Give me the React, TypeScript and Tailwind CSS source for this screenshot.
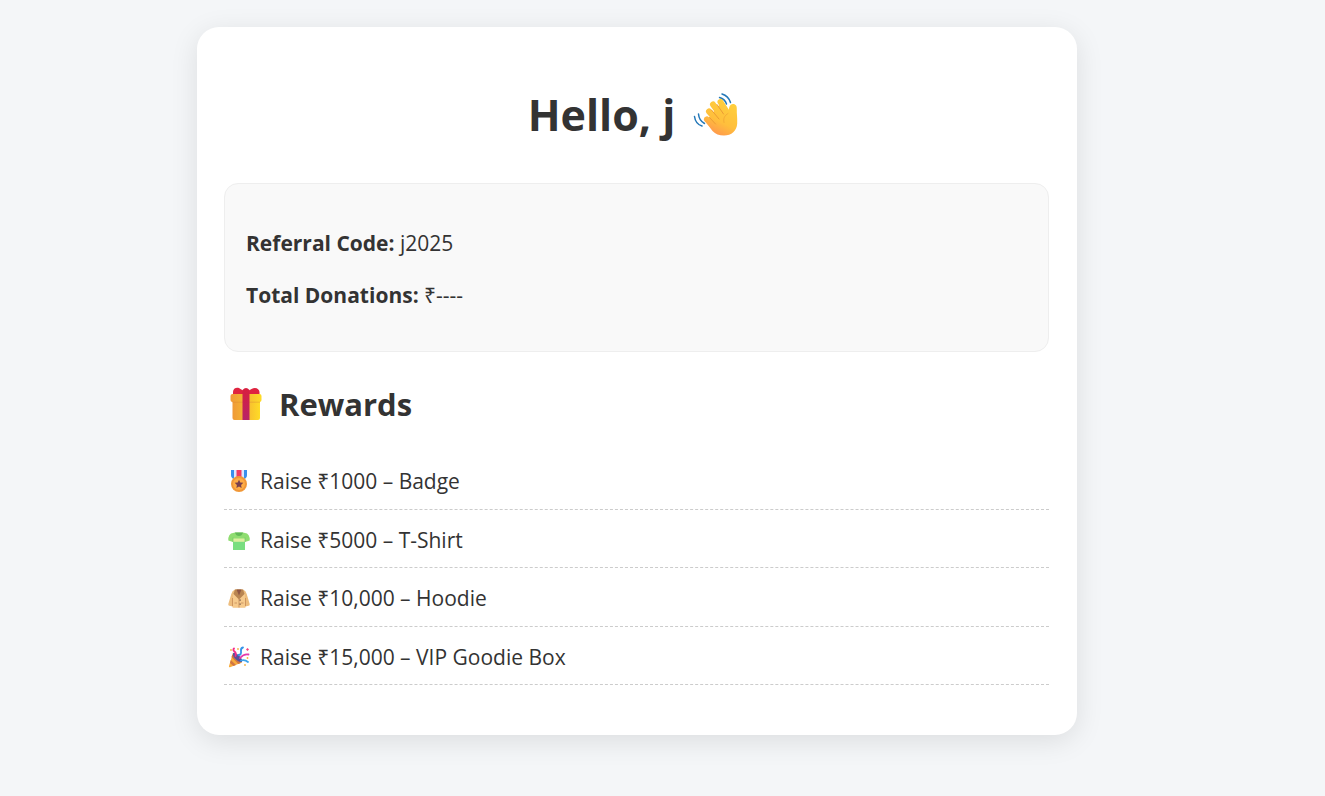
import type { ReactNode } from "react";

function WaveIcon() {
  return (
    <svg viewBox="0 0 46 46" className="h-[46px] w-[46px] shrink-0" aria-hidden="true">
      <defs>
        <linearGradient id="hand" gradientUnits="userSpaceOnUse" x1="36" y1="8" x2="18" y2="42">
          <stop offset="0" stopColor="#ffd03c" />
          <stop offset="0.6" stopColor="#ffbf3c" />
          <stop offset="1" stopColor="#ff944f" />
        </linearGradient>
      </defs>
      <g fill="none" stroke="#2478b8" strokeWidth="1.5" strokeLinecap="round">
        <path d="M26.500 5.500q5.500 1.500 7 6.500" />
        <path d="M29 2q6.500 2 8.500 8.500" />
        <path d="M5.500 22q.5 6.500 6 9.500" />
        <path d="M1.500 24.500q1 7.500 7.500 9.500" />
      </g>
      <g stroke="url(#hand)" strokeWidth="6" strokeLinecap="round" fill="none">
        <path d="M27.500 10 37 25" />
        <path d="M20 12.500 31 28" />
        <path d="M16 19.500 27 32" />
        <path d="M14 27.500 23 37" />
      </g>
      <path fill="url(#hand)" d="M18 23 27 12l6.500 8.500c1 1 2 .5 2.200-1 .1-4.500 1.300-7.500 4.300-7.500 3 0 4 2.300 3.800 5.500-.2 4 .7 8 .4 14C43.800 39 38.500 43.500 31 43.500c-5 0-8.500-1.500-11.500-4.500l-6-8z" />
      <g fill="none" stroke="#ec9c34" strokeWidth="1" strokeLinecap="round">
        <path d="M24 12.500 30.500 22" />
        <path d="M18.500 18 26 27" />
        <path d="M16.500 25.500 22.500 32" />
        <path d="M35 21.500c-3.500 2-5 5-4 9" opacity="0.6" />
      </g>
    </svg>
  );
}

function GiftIcon() {
  return (
    <svg viewBox="0 0 34 34" className="h-[34px] w-[34px] shrink-0" aria-hidden="true">
      <defs>
        <linearGradient id="box">
          <stop offset="0" stopColor="#f09a38" />
          <stop offset="0.5" stopColor="#f4b832" />
          <stop offset="1" stopColor="#ffdc26" />
        </linearGradient>
        <linearGradient id="ribbon" x2="0" y2="1">
          <stop offset="0" stopColor="#d91e3d" />
          <stop offset="1" stopColor="#b72468" />
        </linearGradient>
      </defs>
      <path fill="#df2440" d="M4 8V5C4 .500 9-.500 11.500 2L15 4h4l3.500-2C26-.500 30.500 1.500 30.500 5V9H4z" />
      <rect x="3.500" y="10" width="27.500" height="23" rx="2" fill="url(#box)" />
      <rect x="1.500" y="7" width="31" height="8" rx="2" fill="url(#box)" />
      <path d="M3.500 15.200H31" stroke="#dc8735" strokeWidth=".6" opacity=".7" />
      <path d="M13.500 3q3.500-4 7 0v30h-7z" fill="url(#ribbon)" />
    </svg>
  );
}

function MedalIcon() {
  return (
    <svg viewBox="0 0 22 24" className="h-6 w-[22px] shrink-0" aria-hidden="true">
      <path fill="#3b8fec" d="M3 1h16v5q0 3-3 4H6Q3 9 3 6z" />
      <path fill="#dce7ff" d="M6 1h10v9H6z" />
      <path fill="#f23b62" d="M8.500 1h5v8h-5z" />
      <circle cx="11" cy="15" r="8" fill="#f29a38" />
      <circle cx="11" cy="15" r="6.400" fill="#ffad45" stroke="#e68938" strokeWidth=".6" />
      <path fill="#79404d" d="m11 10.700 1.300 2.700 3 .4-2.200 2.100.5 3-2.600-1.400-2.600 1.400.5-3-2.200-2.100 3-.4z" />
    </svg>
  );
}

function ShirtIcon() {
  return (
    <svg viewBox="0 0 22 24" className="h-6 w-[22px] shrink-0" aria-hidden="true">
      <path fill="#8fdd70" d="M7 4.500 3 5.500Q1 6.500.3 10v2.500l4.700 1.500v8h12v-8l4.700-1.500V10Q21 6.500 19 5.500L15 4.500z" />
      <path fill="#79de80" d="M5 13h12v8q0 1-1 1H6q-1 0-1-1z" />
      <path fill="#dcefa0" d="M5 10.500h12v3.300H5z" />
      <path fill="#62b957" d="M7 4.500h8q-1 3.500-4 3.500T7 4.500z" />
      <path d="M5 9.500V14M17 9.500V14" stroke="#69c56a" strokeWidth=".6" />
    </svg>
  );
}

function CoatIcon() {
  return (
    <svg viewBox="0 0 22 24" className="h-6 w-[22px] shrink-0" aria-hidden="true">
      <path fill="#edbd7d" d="M7 3.500Q4 4.500 3.300 8L.3 18q-.3 1.500 1 1.800L4.500 20.500v1h13v-1l3.200-.700q1.300-.300 1-1.800L18.700 8Q18 4.500 15 3.500z" />
      <path fill="#f6ca8c" d="M5 8h12v13.500H5z" />
      <path fill="#b98551" d="m7 3.500h8l1.500 4.500-5.500 5.500-5.500-5.500z" />
      <path fill="#8f5743" d="m8.500 3.500 2.500 6 2.500-6z" />
      <path d="M11 13v8.500M4.500 12v8M17.500 12v8M6.500 17h2.500M13 17h2.500" stroke="#c58a58" strokeWidth=".8" />
      <path fill="#65463e" d="M11.500 13.500h1.200v1.200h-1.200zm0 4h1.200v1.200h-1.200z" />
    </svg>
  );
}

function PartyIcon() {
  return (
    <svg viewBox="0 0 22 24" className="h-6 w-[22px] shrink-0" aria-hidden="true">
      <path fill="#f8ac3c" d="m5 8 9 9.500-12 4.800Q.5 22.500 1 21z" />
      <path fill="#d17542" d="m3.500 12 .8-2.500 8.500 8.500-2.500 1zM2 18l.8-3 5.200 5-2.500 1z" />
      <ellipse cx="9.500" cy="12.500" rx="2.500" ry="6.200" transform="rotate(-45 9.500 12.500)" fill="#56519c" />
      <g fill="none" strokeWidth="1.800" strokeLinecap="round">
        <path d="M7.500 11q1-3-1-4.500t-.5-3" stroke="#f52d89" />
        <path d="M10.500 10q3 0 2.500-3.500t2-4" stroke="#3694e9" />
        <path d="M12 13q4-4.500 8.500-3.500" stroke="#e43bab" />
        <path d="M13 15.500q4-1 7 1.500" stroke="#3ba4ed" />
      </g>
      <g fill="#f7b342">
        <circle cx="10" cy="4" r=".9" /><circle cx="3" cy="5" r=".9" /><circle cx="19.500" cy="13" r=".9" /><circle cx="17" cy="20" r=".9" />
      </g>
      <path fill="#f43f7e" d="m18 4.500 1.500-1.500L21 4.500l-1.500 1.500z" />
    </svg>
  );
}

const rewards: { icon: ReactNode; label: string }[] = [
  { icon: <MedalIcon />, label: "Raise ₹1000 – Badge" },
  { icon: <ShirtIcon />, label: "Raise ₹5000 – T-Shirt" },
  { icon: <CoatIcon />, label: "Raise ₹10,000 – Hoodie" },
  { icon: <PartyIcon />, label: "Raise ₹15,000 – VIP Goodie Box" },
];

export default function App() {
  return (
    <div className="flex min-h-screen items-start justify-center bg-[#f4f6f8] py-[27px] pr-[51px] font-['Open_Sans','Noto_Sans',sans-serif] text-[21px] leading-[30px] text-[#333]">
      <main className="w-full max-w-[880px] rounded-[22px] bg-white pr-7 pl-[27px] pt-[58px] pb-[50px] shadow-[0_6px_28px_rgba(0,0,0,0.1)]">
        <h1 className="flex items-center justify-center gap-[18px] pr-1.5 text-[43px] leading-[60px] font-bold">
          Hello, j <WaveIcon />
        </h1>
        <section className="mt-[38px] rounded-[14px] border border-[#eee] bg-[#f9f9f9] px-[21px] pt-[44px] pb-[41px]">
          <p><strong>Referral Code:</strong> j2025</p>
          <p className="mt-[22px]"><strong>Total Donations:</strong> ₹----</p>
        </section>
        <h2 className="mt-[30px] flex items-center gap-4 pl-[5px] text-[31px] leading-[44px] font-bold">
          <GiftIcon /> Rewards
        </h2>
        <ul className="mt-[25px] grid h-[234px] auto-rows-fr">
          {rewards.map(({ icon, label }) => (
            <li key={label} className="flex items-center gap-[10px] border-b border-dashed border-[#ccc] pt-[3px] pl-1">
              {icon}
              <span>{label}</span>
            </li>
          ))}
        </ul>
      </main>
    </div>
  );
}
